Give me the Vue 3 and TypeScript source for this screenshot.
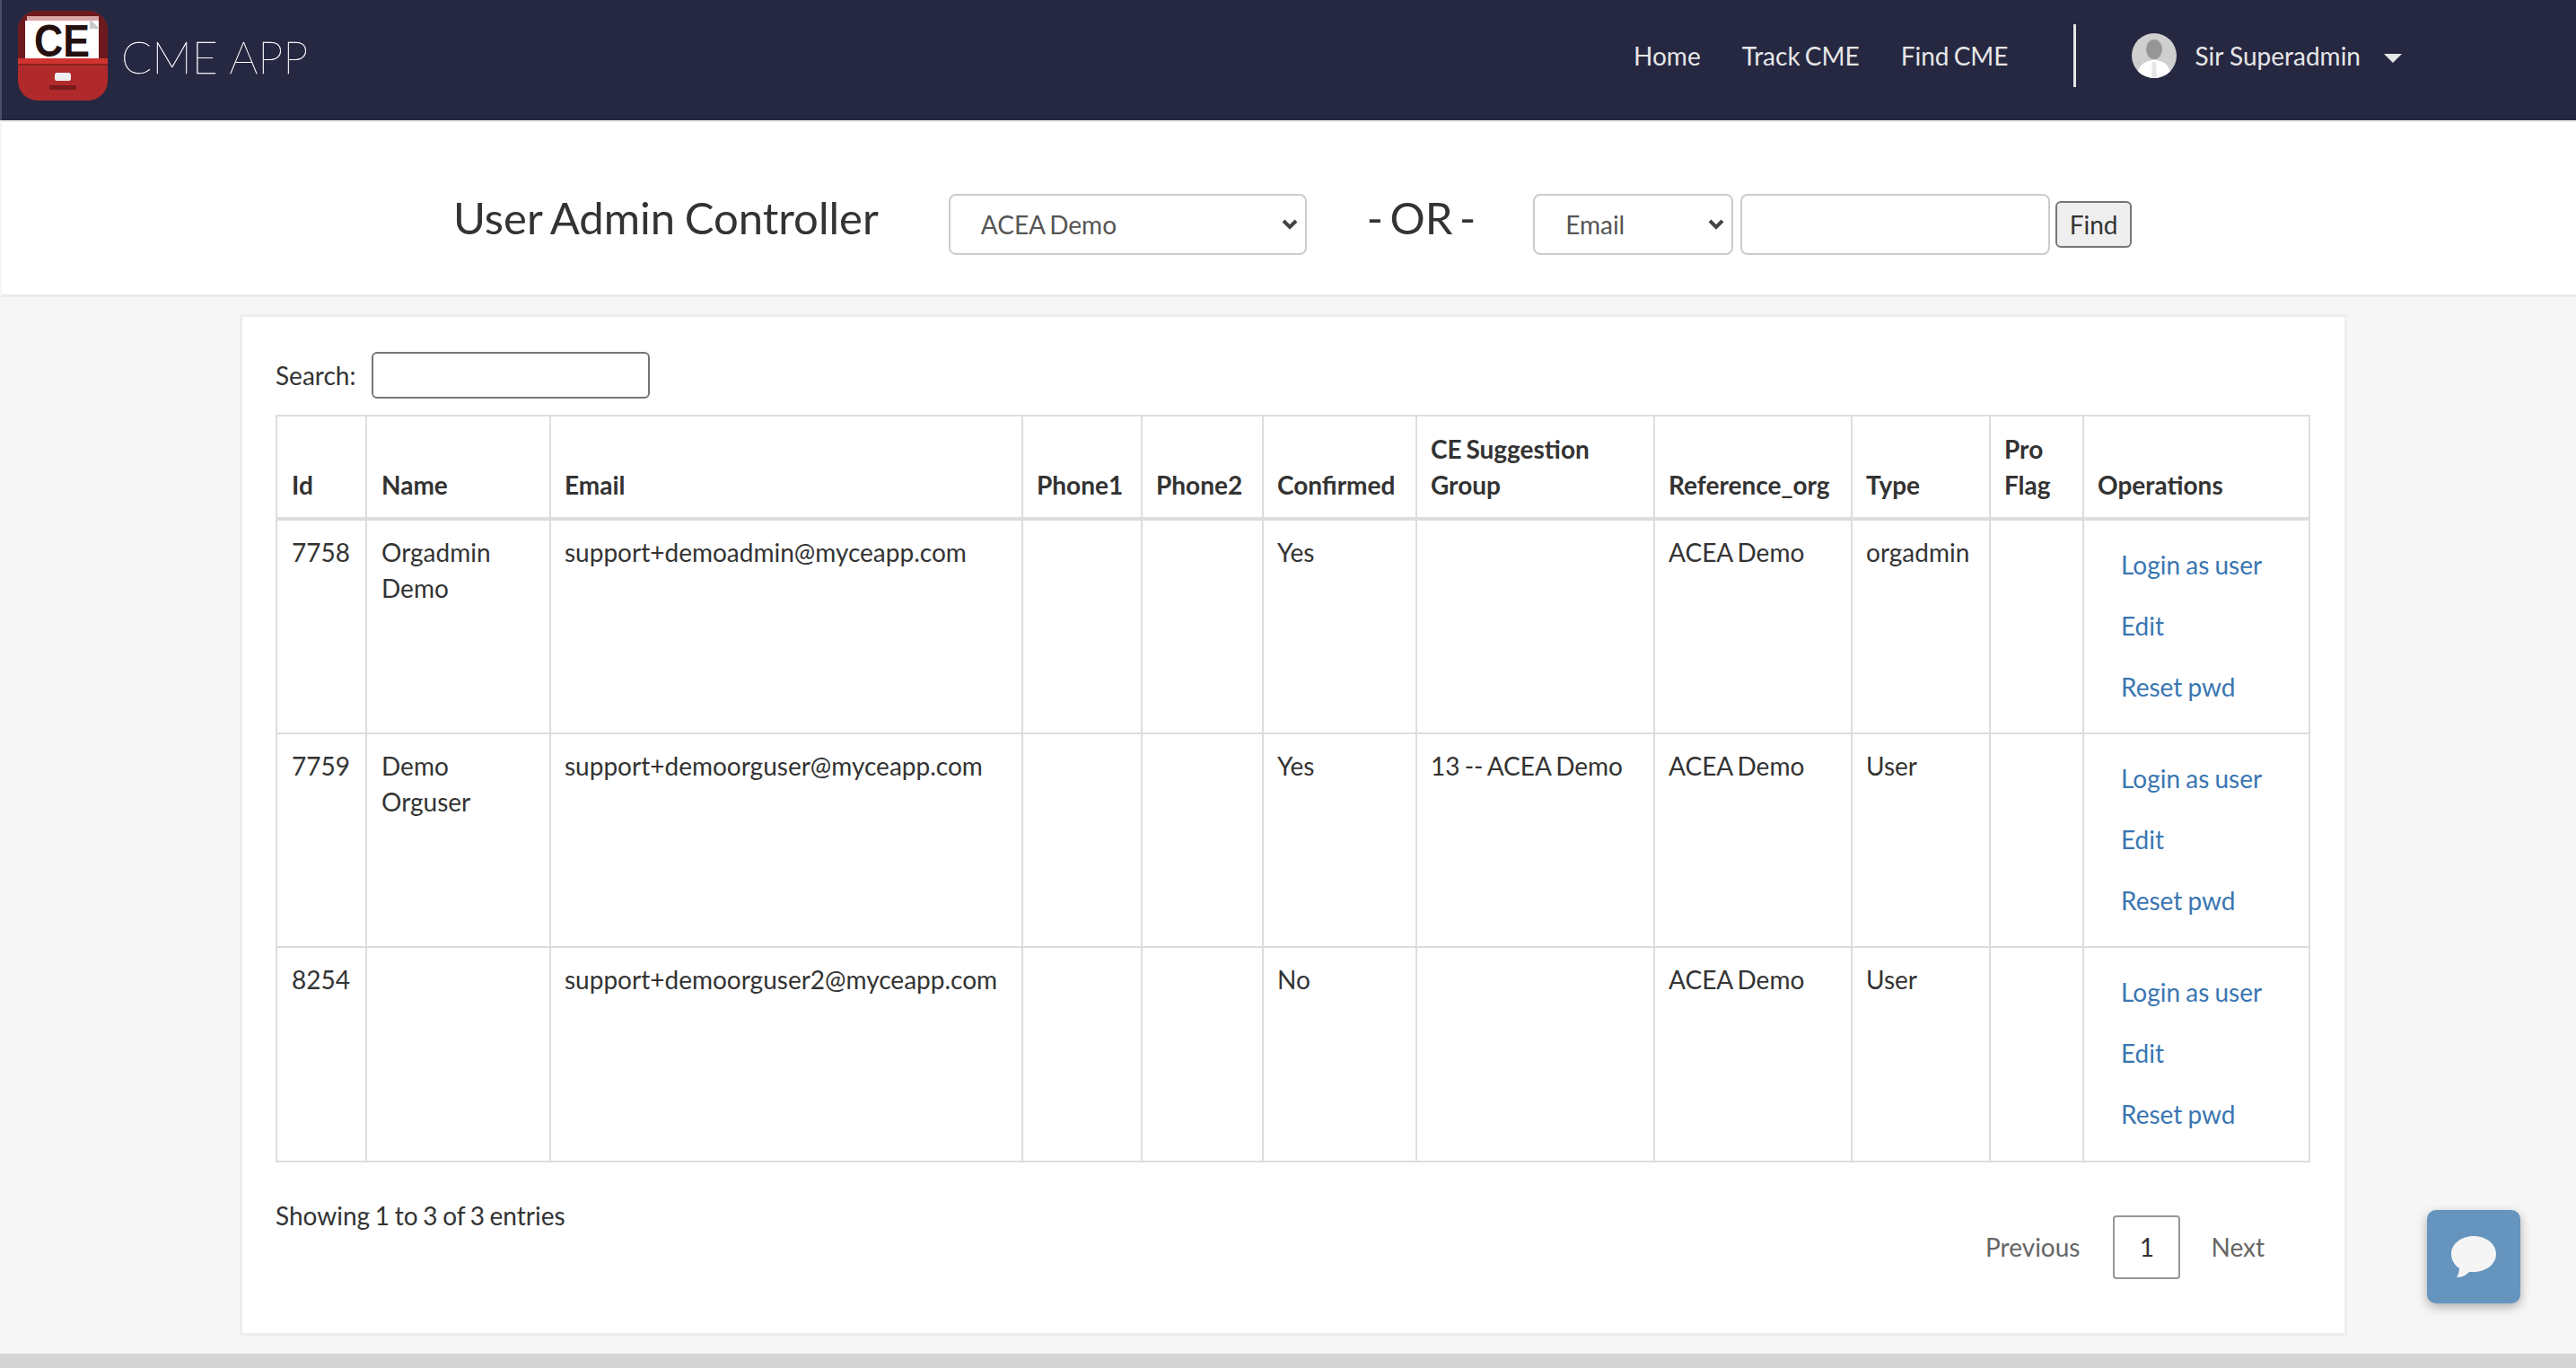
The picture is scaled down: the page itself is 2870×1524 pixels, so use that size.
<script setup lang="ts">
interface UserRow {
  id: number;
  name: string;
  email: string;
  phone1: string;
  phone2: string;
  confirmed: string;
  group: string;
  org: string;
  type: string;
  pro: string;
}

const columns = [
  { key: 'id', label: 'Id' },
  { key: 'name', label: 'Name' },
  { key: 'email', label: 'Email' },
  { key: 'phone1', label: 'Phone1' },
  { key: 'phone2', label: 'Phone2' },
  { key: 'confirmed', label: 'Confirmed' },
  { key: 'group', label: 'CE Suggestion Group' },
  { key: 'org', label: 'Reference_org' },
  { key: 'type', label: 'Type' },
  { key: 'pro', label: 'Pro Flag' },
] as const;

const rows: UserRow[] = [
  { id: 7758, name: 'Orgadmin Demo', email: 'support+demoadmin@myceapp.com', phone1: '', phone2: '', confirmed: 'Yes', group: '', org: 'ACEA Demo', type: 'orgadmin', pro: '' },
  { id: 7759, name: 'Demo Orguser', email: 'support+demoorguser@myceapp.com', phone1: '', phone2: '', confirmed: 'Yes', group: '13 -- ACEA Demo', org: 'ACEA Demo', type: 'User', pro: '' },
  { id: 8254, name: '', email: 'support+demoorguser2@myceapp.com', phone1: '', phone2: '', confirmed: 'No', group: '', org: 'ACEA Demo', type: 'User', pro: '' },
];

const navLinks = ['Home', 'Track CME', 'Find CME'];
const operations = ['Login as user', 'Edit', 'Reset pwd'];
</script>

<template>
  <div class="page">
    <header class="navbar">
      <a class="brand" href="#">
        <svg class="logo" viewBox="0 0 100 100" aria-hidden="true">
          <rect x="0" y="0" width="100" height="100" rx="22" fill="#b12a2b" />
          <path d="M0 53V22A22 22 0 0 1 22 0H78A22 22 0 0 1 100 22V53Z" fill="#6d1a1c" />
          <rect x="10" y="6" width="80" height="6" fill="#d9a5a5" />
          <path d="M8 11H90V53H8Z" fill="#fff" />
          <path d="M80 9L91 20H80Z" fill="#c9c9c9" />
          <text x="49" y="51" class="logo-text" text-anchor="middle" textLength="62" lengthAdjust="spacingAndGlyphs">CE</text>
          <rect x="0" y="53" width="100" height="6" fill="#cf3330" />
          <rect x="0" y="59" width="100" height="2" fill="#8e1f20" />
          <rect x="41" y="69" width="18" height="9" rx="2.5" fill="#eeeef2" />
          <rect x="35" y="83" width="30" height="5" fill="#7a1a1b" />
        </svg>
        <span class="brand-name">CME APP</span>
      </a>
      <nav class="nav">
        <a v-for="link in navLinks" :key="link" href="#" class="nav-link">{{ link }}</a>
        <span class="nav-divider"></span>
        <a href="#" class="user">
          <svg class="avatar" viewBox="0 0 50 50" aria-hidden="true">
            <clipPath id="avatar-clip"><circle cx="25" cy="25" r="25" /></clipPath>
            <g clip-path="url(#avatar-clip)">
              <rect width="50" height="50" fill="#cfcfcf" />
              <ellipse cx="25" cy="18" rx="9" ry="11" fill="#969696" />
              <path d="M6 50C6 36 15 30 25 30C35 30 44 36 44 50Z" fill="#fff" />
              <path d="M23 32H27L28 50H22Z" fill="#e6e6e6" />
            </g>
          </svg>
          <span class="user-name">Sir Superadmin</span>
          <span class="caret"></span>
        </a>
      </nav>
    </header>

    <section class="controller">
      <h1 class="title">User Admin Controller</h1>
      <select class="control org-select">
        <option>ACEA Demo</option>
      </select>
      <span class="title or">- OR -</span>
      <select class="control field-select">
        <option>Email</option>
      </select>
      <input class="control find-input" type="text" />
      <button class="find-btn" type="button">Find</button>
    </section>

    <main class="card">
      <label class="search">
        <span>Search:</span>
        <input type="search" class="search-input" />
      </label>

      <table class="users">
        <colgroup>
          <col class="c-id" />
          <col class="c-name" />
          <col class="c-email" />
          <col class="c-phone" />
          <col class="c-phone2" />
          <col class="c-confirmed" />
          <col class="c-group" />
          <col class="c-org" />
          <col class="c-type" />
          <col class="c-pro" />
          <col class="c-ops" />
        </colgroup>
        <thead>
          <tr>
            <th v-for="col in columns" :key="col.key">{{ col.label }}</th>
            <th>Operations</th>
          </tr>
        </thead>
        <tbody>
          <tr v-for="row in rows" :key="row.id">
            <td v-for="col in columns" :key="col.key">{{ row[col.key] }}</td>
            <td class="ops">
              <a v-for="op in operations" :key="op" href="#">{{ op }}</a>
            </td>
          </tr>
        </tbody>
      </table>

      <div class="table-footer">
        <div class="info">Showing 1 to 3 of 3 entries</div>
        <div class="pager">
          <a href="#">Previous</a>
          <a href="#" class="current">1</a>
          <a href="#">Next</a>
        </div>
      </div>
    </main>

    <div class="scrollbar"></div>

    <button class="chat" type="button" aria-label="Chat">
      <svg viewBox="0 0 50 46" aria-hidden="true">
        <path d="M25 0C39 0 50 9 50 20C50 31 39 40 25 40C23 40 22 40 20 40C17 43 13 46 6 46C8 43 9 39 9 36C3 32 0 26 0 20C0 9 11 0 25 0Z" fill="#f5f5f5" />
      </svg>
    </button>
  </div>
</template>

<style>
html,
body {
  margin: 0;
  background: #f6f6f6;
  overflow: hidden;
}
</style>

<style scoped>
.page {
  position: relative;
  height: 1524px;
  font-family: Lato, 'Liberation Sans', sans-serif;
  font-size: 28px;
  line-height: 40px;
  word-spacing: -2px;
  color: #333;
  background: #f6f6f6;
  box-sizing: border-box;
  display: flex;
  flex-direction: column;
  overflow: hidden;
}

a {
  text-decoration: none;
}

.navbar {
  height: 134px;
  flex: none;
  box-sizing: border-box;
  background: #262842;
  border-left: 2px solid #4b4d66;
  display: flex;
  align-items: center;
  justify-content: space-between;
  padding: 0 194px 10px 18px;
}

.brand {
  display: flex;
  align-items: center;
  gap: 15px;
}

.logo {
  width: 100px;
  height: 100px;
  flex: none;
}

.logo-text {
  font-family: 'Liberation Sans', sans-serif;
  font-weight: 700;
  font-size: 50px;
  fill: #24100f;
}

.brand-name {
  font-size: 50px;
  font-weight: 200;
  line-height: 60px;
  word-spacing: 0;
  color: #fff;
  -webkit-text-stroke: 0.4px #fff;
  margin-top: 2px;
}

.nav {
  display: flex;
  align-items: center;
  color: #e6e6e6;
}

.nav-link {
  color: #e6e6e6;
  margin-right: 46px;
}

.nav-link:nth-child(3) {
  margin-right: 72px;
}

.nav-divider {
  width: 3px;
  height: 70px;
  background: #e6e6e6;
  margin-right: 62px;
}

.user {
  display: flex;
  align-items: center;
  color: #e6e6e6;
}

.user-name {
  word-spacing: 0;
}

.avatar {
  width: 50px;
  height: 50px;
  margin-right: 21px;
}

.caret {
  width: 0;
  height: 0;
  margin: 6px 0 0 26px;
  border-left: 10px solid transparent;
  border-right: 10px solid transparent;
  border-top: 10px solid #e6e6e6;
}

.controller {
  height: 197px;
  flex: none;
  box-sizing: border-box;
  margin-left: 2px;
  padding: 35px 0 0 503px;
  background: #fff;
  border-top: 2px solid #eeeeea;
  border-bottom: 3px solid #ebebeb;
  display: flex;
  align-items: center;
}

.title {
  margin: 0;
  font-size: 49px;
  font-weight: 400;
  line-height: 60px;
  word-spacing: -2px;
  color: #333;
  position: relative;
  top: -8px;
}

.control {
  box-sizing: border-box;
  height: 68px;
  font: inherit;
  word-spacing: -2px;
  color: #555;
  background: #fff;
  border: 2px solid #ccc;
  border-radius: 8px;
  outline: none;
}

select.control {
  appearance: none;
  padding: 0 40px 0 34px;
  background-image: url("data:image/svg+xml,%3Csvg xmlns='http://www.w3.org/2000/svg' viewBox='0 0 18 12'%3E%3Cpath d='M2 2l7 7 7-7' fill='none' stroke='%23444' stroke-width='4'/%3E%3C/svg%3E");
  background-repeat: no-repeat;
  background-size: 18px 12px;
  background-position: right 8px center;
}

.org-select {
  width: 399px;
  margin-left: 78px;
}

.or {
  margin: 0 64px 0 67px;
  word-spacing: -5px;
}

.field-select {
  width: 223px;
}

.find-input {
  width: 345px;
  margin-left: 8px;
}

.find-btn {
  box-sizing: border-box;
  width: 85px;
  height: 52px;
  margin-left: 6px;
  padding: 0;
  font: inherit;
  color: #333;
  background: #efefef;
  border: 2px solid #767676;
  border-radius: 6px;
}

.card {
  box-sizing: border-box;
  width: 2348px;
  height: 1138px;
  flex: none;
  margin: 19px 0 0 267px;
  padding: 39px 38px 0 37px;
  background: #fff;
  border: 3px solid #eeeeee;
}

.search {
  display: flex;
  align-items: center;
  gap: 18px;
  height: 52px;
  margin-bottom: 18px;
}

.search-input {
  box-sizing: border-box;
  width: 310px;
  height: 52px;
  border: 2px solid #767676;
  border-radius: 6px;
  background: #fff;
  outline: none;
}

.users {
  width: 2265px;
  table-layout: fixed;
  border-collapse: collapse;
}

.c-id { width: 100px; }
.c-name { width: 205px; }
.c-email { width: 526px; }
.c-phone { width: 133px; }
.c-phone2 { width: 135px; }
.c-confirmed { width: 171px; }
.c-group { width: 265px; }
.c-org { width: 220px; }
.c-type { width: 154px; }
.c-pro { width: 104px; }
.c-ops { width: 252px; }

th,
td {
  border: 2px solid #ddd;
  padding: 15px;
  vertical-align: top;
  text-align: left;
  font-weight: 400;
}

th {
  vertical-align: bottom;
  font-weight: 700;
  border-bottom-width: 4px;
  padding: 16px 15px;
}

th:nth-child(-n + 2),
td:nth-child(-n + 2) {
  padding-left: 16px;
}

tbody tr {
  height: 238.5px;
}

.ops {
  padding: 15px 15px 0 41px;
}

.ops a {
  display: block;
  color: #3a76b2;
  line-height: 40px;
  padding: 14px 0;
  word-spacing: -1px;
}

.table-footer {
  display: flex;
  justify-content: space-between;
  align-items: flex-start;
  margin-top: 39px;
}

.info {
  word-spacing: -1.5px;
}

.pager {
  display: flex;
  align-items: center;
  margin: 20px 51px 0 0;
}

.pager a {
  color: #666;
}

.pager .current {
  box-sizing: border-box;
  width: 75px;
  height: 71px;
  margin: 0 34px 0 37px;
  display: flex;
  align-items: center;
  justify-content: center;
  color: #333;
  border: 2px solid #979797;
  border-radius: 4px;
}

.scrollbar {
  height: 16px;
  margin-top: auto;
  flex: none;
  background: #d5d5d5;
}

.chat {
  position: absolute;
  left: 2704px;
  top: 1348px;
  width: 104px;
  height: 104px;
  padding: 0;
  display: flex;
  align-items: center;
  justify-content: center;
  border: none;
  border-radius: 10px;
  background: #6594be;
  box-shadow: 0 4px 12px rgba(0, 0, 0, 0.3);
}

.chat svg {
  width: 50px;
  height: 46px;
}
</style>
